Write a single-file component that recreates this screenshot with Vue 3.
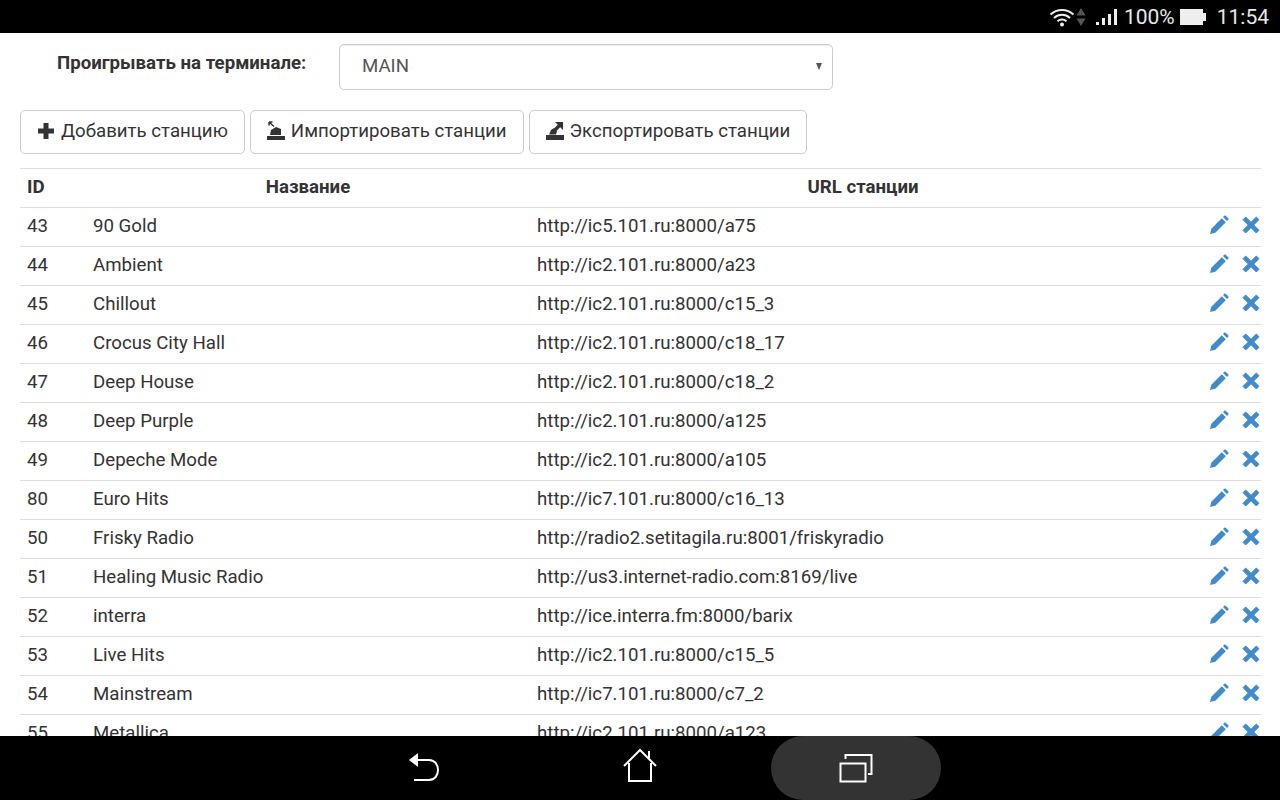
<template>
  <div class="screen">
    <div class="status-bar">
      <svg class="wifi" width="26" height="20" viewBox="0 0 26 20">
        <path d="M1.500 7.500C8 1.500 18 1.500 24.500 7.500M5 11C9.500 6.800 16.500 6.800 21 11M8.500 14.200C11 12 15 12 17.500 14.200" fill="none" stroke="#eee" stroke-width="2" />
        <circle cx="13" cy="17.500" r="2" fill="#eee" />
      </svg>
      <svg class="updown" width="10" height="20" viewBox="0 0 10 20">
        <path d="M5 1L9.500 8.500H.5Z M.5 11.500H9.500L5 19Z" fill="#555" />
      </svg>
      <svg class="signal" width="24" height="20" viewBox="0 0 24 20">
        <path d="M1 15h3v3H1zM7 11h3v7H7zM13 7h3v11h-3zM19 2h3v16h-3z" fill="#eee" />
      </svg>
      <span class="pct">100%</span>
      <svg class="battery" width="27" height="18" viewBox="0 0 27 18">
        <path d="M0 1h23v4h3v8h-3v4H0z" fill="#eee" />
      </svg>
      <span class="clock">11:54</span>
    </div>

    <main class="page">
      <div class="terminal-row">
        <label class="terminal-label">Проигрывать на терминале:</label>
        <div class="select">
          <span>MAIN</span>
          <i class="caret"></i>
        </div>
      </div>

      <div class="toolbar">
        <button class="btn">
          <svg width="18" height="18" viewBox="0 0 18 18"><path d="M6.500 1h5v5.500H17v5h-5.500V17h-5v-5.500H1v-5h5.500z" fill="#333" /></svg>
          Добавить станцию
        </button>
        <button class="btn">
          <svg width="18" height="20" viewBox="0 0 18 20">
            <path d="M0 15h18v4H0z" fill="#333" />
            <path d="M3 14l1-5 5-3 5 2v6z" fill="#333" />
            <path d="M2 1l5 4.500M2 1v3.500M2 1h3.500" fill="none" stroke="#333" stroke-width="1.500" />
          </svg>
          Импортировать станции
        </button>
        <button class="btn">
          <svg width="18" height="20" viewBox="0 0 18 20">
            <path d="M0 14h18v5H0z" fill="#333" />
            <path d="M3 13.500L5 9l3-2 3 3-1 3.500z" fill="#333" />
            <path d="M9 1h8v8l-2.800-2.800L10.500 10 8 7.500l3.800-3.700z" fill="#333" />
          </svg>
          Экспортировать станции
        </button>
      </div>

      <table class="stations">
        <colgroup>
          <col class="col-id" />
          <col class="col-name" />
          <col class="col-url" />
          <col />
        </colgroup>
        <thead>
          <tr>
            <th class="left">ID</th>
            <th>Название</th>
            <th>URL станции</th>
            <th></th>
          </tr>
        </thead>
        <tbody>
          <tr v-for="s in stations" :key="s.id">
            <td>{{ s.id }}</td>
            <td>{{ s.name }}</td>
            <td>{{ s.url }}</td>
            <td class="actions">
              <svg width="20" height="20" viewBox="0 0 20 20">
                <path d="M1 19l1.300-5.300L12.800 3.200l4 4L6.300 17.700zM14 2l1.300-1.300c.4-.4 1-.4 1.400 0l2.600 2.600c.4.4.4 1 0 1.400L18 6z" fill="#428bca" />
              </svg>
              <svg width="18" height="18" viewBox="0 0 18 18">
                <path d="M3.700 1L9 6.300 14.300 1 17 3.700 11.700 9 17 14.300 14.300 17 9 11.700 3.700 17 1 14.300 6.300 9 1 3.700z" fill="#428bca" stroke="#428bca" stroke-linejoin="round" />
              </svg>
            </td>
          </tr>
        </tbody>
      </table>
    </main>

    <div class="nav-bar">
      <svg class="nav-back" width="34" height="32" viewBox="0 0 34 32">
        <path d="M1 9L10 2V16Z" fill="#fff" />
        <path d="M9 9H21C33 9 33 29 21 29H6" fill="none" stroke="#fff" stroke-width="2" />
      </svg>
      <svg class="nav-home" width="34" height="36" viewBox="0 0 34 36">
        <path d="M1 18L17 2 33 18M26 10V3M6 15V33H28V15" fill="none" stroke="#fff" stroke-width="2" />
      </svg>
      <div class="nav-recent">
        <svg width="34" height="30" viewBox="0 0 34 30">
          <path d="M1.500 10.500H26.500V28.500H1.500Z" fill="none" stroke="#fff" stroke-width="2" />
          <path d="M6.500 6V2H32.500V21H29" fill="none" stroke="#fff" stroke-width="2" />
        </svg>
      </div>
    </div>
  </div>
</template>

<script setup>
const stations = [
  { id: 43, name: '90 Gold', url: 'http://ic5.101.ru:8000/a75' },
  { id: 44, name: 'Ambient', url: 'http://ic2.101.ru:8000/a23' },
  { id: 45, name: 'Chillout', url: 'http://ic2.101.ru:8000/c15_3' },
  { id: 46, name: 'Crocus City Hall', url: 'http://ic2.101.ru:8000/c18_17' },
  { id: 47, name: 'Deep House', url: 'http://ic2.101.ru:8000/c18_2' },
  { id: 48, name: 'Deep Purple', url: 'http://ic2.101.ru:8000/a125' },
  { id: 49, name: 'Depeche Mode', url: 'http://ic2.101.ru:8000/a105' },
  { id: 80, name: 'Euro Hits', url: 'http://ic7.101.ru:8000/c16_13' },
  { id: 50, name: 'Frisky Radio', url: 'http://radio2.setitagila.ru:8001/friskyradio' },
  { id: 51, name: 'Healing Music Radio', url: 'http://us3.internet-radio.com:8169/live' },
  { id: 52, name: 'interra', url: 'http://ice.interra.fm:8000/barix' },
  { id: 53, name: 'Live Hits', url: 'http://ic2.101.ru:8000/c15_5' },
  { id: 54, name: 'Mainstream', url: 'http://ic7.101.ru:8000/c7_2' },
  { id: 55, name: 'Metallica', url: 'http://ic2.101.ru:8000/a123' }
]
</script>

<style>
html,
body {
  margin: 0;
  background: #000;
}
</style>

<style scoped>
.screen {
  width: 1280px;
  height: 800px;
  display: flex;
  flex-direction: column;
  overflow: hidden;
  font-family: Roboto, "Liberation Sans", sans-serif;
  font-size: 18.67px;
  color: #333;
  background: #fff;
}

.status-bar {
  height: 33px;
  flex: none;
  background: #000;
  color: #e8e8e8;
  display: flex;
  align-items: center;
  justify-content: flex-end;
  padding-right: 11px;
  font-size: 21px;
}

.wifi {
  margin-right: 1px;
}

.updown {
  margin-right: 9px;
}

.signal {
  margin-right: 5px;
}

.pct {
  margin-right: 5px;
}

.battery {
  margin-right: 10px;
}

.page {
  flex: 1;
  min-height: 0;
  overflow: hidden;
  padding: 11px 19px 0 20px;
}

.terminal-row {
  display: flex;
  height: 46px;
}

.terminal-label {
  width: 319px;
  padding: 9px 0 0 37px;
  box-sizing: border-box;
  font-weight: 700;
  line-height: 21px;
}

.select {
  width: 494px;
  height: 46px;
  box-sizing: border-box;
  border: 1px solid #ccc;
  border-radius: 5px;
  padding: 0 10px 2px 22px;
  display: flex;
  align-items: center;
  justify-content: space-between;
  color: #555;
  box-shadow: inset 0 1px 1px rgba(0, 0, 0, 0.075);
}

.caret {
  width: 0;
  height: 0;
  border-left: 3px solid transparent;
  border-right: 3px solid transparent;
  border-top: 7px solid #555;
}

.toolbar {
  display: flex;
  gap: 5px;
  margin-top: 20px;
}

.btn {
  height: 44px;
  padding: 0 16px 2px;
  display: flex;
  align-items: center;
  gap: 6px;
  border: 1px solid #ccc;
  border-radius: 5px;
  background: #fff;
  color: #333;
  font: inherit;
  white-space: nowrap;
}

.stations {
  width: 1241px;
  margin-top: 14px;
  table-layout: fixed;
  border-collapse: collapse;
}

.col-id {
  width: 66px;
}

.col-name {
  width: 444px;
}

.col-url {
  width: 666px;
}

th,
td {
  height: 39px;
  box-sizing: border-box;
  padding: 0 7px 2px;
  border-top: 1px solid #ddd;
  text-align: left;
  white-space: nowrap;
}

th {
  font-weight: 700;
  text-align: center;
}

th.left {
  text-align: left;
}

td.actions {
  padding: 0 7px 6px 0;
  text-align: right;
}

.actions svg {
  vertical-align: middle;
  margin-left: 13px;
}

.nav-bar {
  height: 64px;
  flex: none;
  position: relative;
  background: #000;
}

.nav-back {
  position: absolute;
  left: 408px;
  top: 15px;
}

.nav-home {
  position: absolute;
  left: 623px;
  top: 12px;
}

.nav-recent {
  position: absolute;
  left: 771px;
  top: 0;
  width: 170px;
  height: 64px;
  border-radius: 32px;
  background: #333;
  display: flex;
  align-items: center;
  justify-content: center;
}
</style>
